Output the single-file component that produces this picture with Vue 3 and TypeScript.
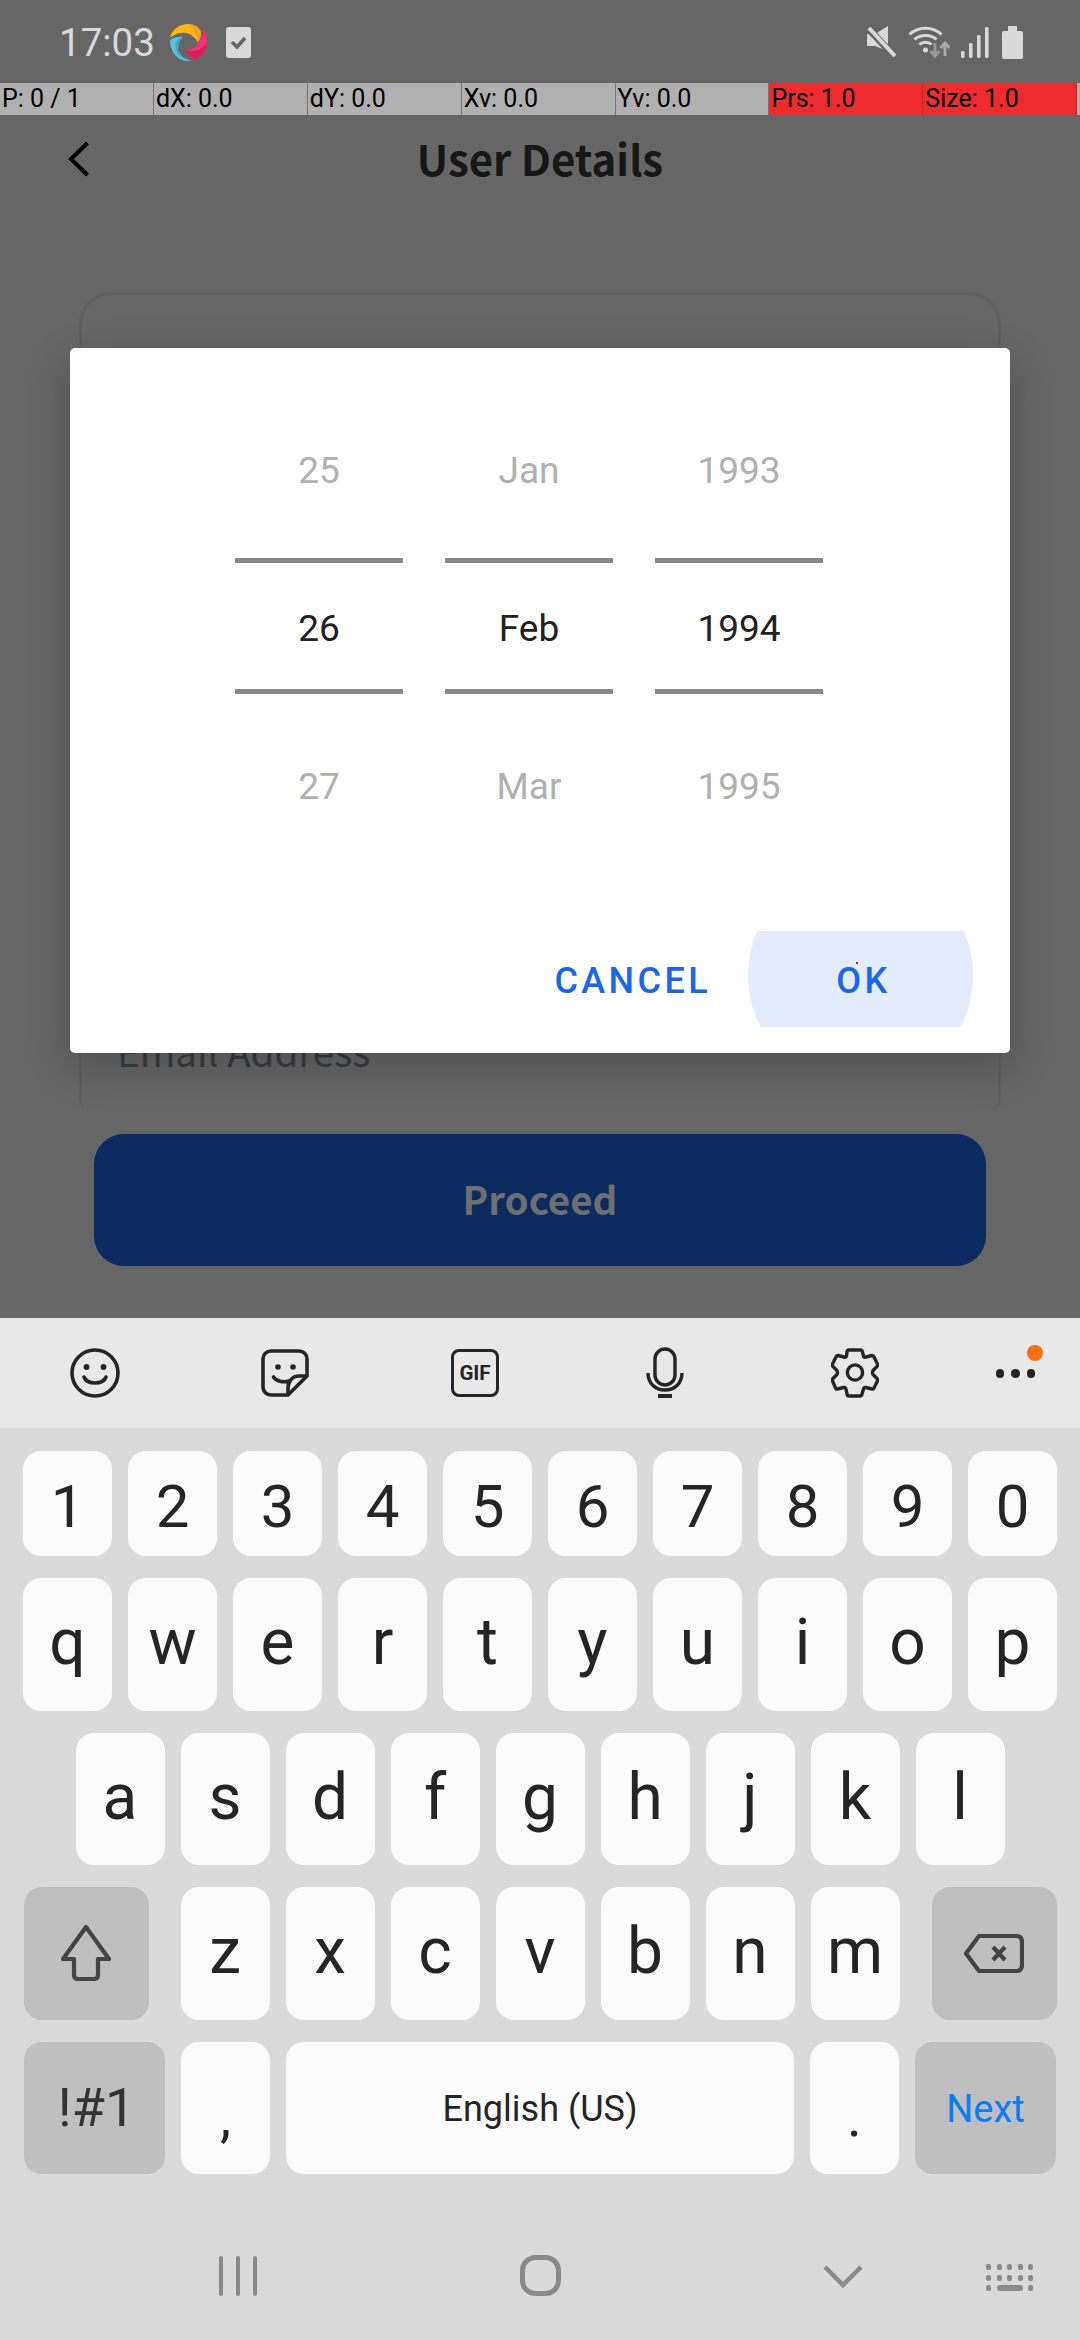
<script setup lang="ts">
const gauges = [
  { text: "P: 0 / 1", alert: false },
  { text: "dX: 0.0", alert: false },
  { text: "dY: 0.0", alert: false },
  { text: "Xv: 0.0", alert: false },
  { text: "Yv: 0.0", alert: false },
  { text: "Prs: 1.0", alert: true },
  { text: "Size: 1.0", alert: true },
];

const wheels = [
  { prev: "25", current: "26", next: "27" },
  { prev: "Jan", current: "Feb", next: "Mar" },
  { prev: "1993", current: "1994", next: "1995" },
];

const digits = "1234567890".split("");
const topRow = "qwertyuiop".split("");
const homeRow = "asdfghjkl".split("");
const lowerRow = "zxcvbnm".split("");
const keyboardDots = [0, 1, 2, 3, 4];
</script>

<template>
  <div class="screen">
    <div class="app-area">
      <div class="status-bar">
        <div class="status-left">
          <span class="time">17:03</span>
          <svg class="logo" width="37" height="37" viewBox="0 0 37 37">
            <path d="M0 14C2 5 10 0 18 0C24 0 29 3 31 8C31 12 30 15 28 18C24 12 18 8 12 9C7 9 3 11 0 14Z" fill="#fdb813" />
            <path d="M18 0C24 0 29 3 31 8C31 12 30 15 28 18C27 11 24 4 18 0Z" fill="#f99d1c" />
            <path d="M33 5C36 8 37 13 37 18C37 27 31 34 24 36C21 33 17 30 15 26C20 26 26 24 28 19C31 15 33 10 33 5Z" fill="#f2336f" />
            <path d="M37 18C37 27 31 34 24 36C21 33 17 30 15 26C23 29 33 26 37 18Z" fill="#d81e5b" />
            <path d="M0 16C3 14 8 12 13 13C9 16 8 21 8 26C10 31 14 35 23 37C21 37 20 37 18 37C8 37 0 28 0 16Z" fill="#5cc3dc" />
            <path d="M13 13C9 16 8 21 8 26C10 31 14 35 23 37C14 37 5 30 5 22C5 18 8 14 13 13Z" fill="#3fa9c9" />
          </svg>
          <svg class="task" width="25" height="31" viewBox="0 0 25 31">
            <rect width="25" height="31" rx="3" fill="#d9d9d9" />
            <path d="M6 15L11 20L19 11" fill="none" stroke="#666" stroke-width="3.6" />
          </svg>
        </div>
        <div class="status-right">
          <svg width="29" height="31" viewBox="0 0 29 31">
            <path d="M0 8H8L21 0V25L8 20H0Z" fill="#d9d9d9" />
            <path d="M0 1L28 31" stroke="#666" stroke-width="7" />
            <path d="M2 2L28 30" stroke="#d9d9d9" stroke-width="4" />
          </svg>
          <svg class="wifi" width="42" height="32" viewBox="0 0 42 32">
            <g fill="none" stroke="#d9d9d9" stroke-width="3">
              <path d="M1.5 8.5C10 0 25 0 33.5 8.5" />
              <path d="M6.5 13.5C12 8 23 8 28.5 13.5" />
              <path d="M11.5 18.5C14.5 15.5 20.5 15.5 23.5 18.5" />
            </g>
            <circle cx="17.5" cy="24" r="2.5" fill="#d9d9d9" />
            <path d="M27 17V29M22.5 25L27 30L31.5 25" fill="none" stroke="#999" stroke-width="3" />
            <path d="M37 30V19M32.5 22L37 17L41.5 22" fill="none" stroke="#a8a8a8" stroke-width="3" />
          </svg>
          <svg class="signal" width="28" height="31" viewBox="0 0 28 31">
            <rect x="0" y="24" width="3.6" height="7" rx="1.2" fill="#d9d9d9" />
            <rect x="8" y="16" width="3.6" height="15" rx="1.2" fill="#d9d9d9" />
            <rect x="16" y="8" width="3.6" height="23" rx="1.2" fill="#d9d9d9" />
            <rect x="24" y="0" width="3.6" height="31" rx="1.2" fill="#d9d9d9" />
          </svg>
          <svg class="battery" width="21" height="33" viewBox="0 0 21 33">
            <path d="M6 0H15V5H19A2 2 0 0 1 21 7V31A2 2 0 0 1 19 33H2A2 2 0 0 1 0 31V7A2 2 0 0 1 2 5H6Z" fill="#d9d9d9" />
          </svg>
        </div>
      </div>

      <div class="pointer-bar">
        <div v-for="g in gauges" :key="g.text" :class="['gauge', { alert: g.alert }]">{{ g.text }}</div>
      </div>

      <header class="header">
        <svg class="back" width="22" height="36" viewBox="0 0 22 36">
          <path d="M19.5 2L3 18L19.5 34" fill="none" stroke="#000" stroke-width="4" />
        </svg>
        <h1>User Details</h1>
      </header>

      <div class="card">
        <span class="email-label">Email Address</span>
      </div>
      <div class="proceed">Proceed</div>

      <div class="dialog">
        <div class="wheels">
          <div v-for="w in wheels" :key="w.current" class="wheel">
            <div class="cell faded">{{ w.prev }}</div>
            <div class="cell current">{{ w.current }}</div>
            <div class="cell faded after">{{ w.next }}</div>
          </div>
        </div>
        <div class="actions">
          <button class="action cancel">CANCEL</button>
          <button class="action ok"><span>OK</span><i class="touch-dot"></i></button>
        </div>
      </div>
    </div>

    <div class="keyboard">
      <div class="toolbar">
        <div class="tool">
          <svg width="50" height="50" viewBox="0 0 50 50">
            <circle cx="25" cy="25" r="23" fill="none" stroke="#252525" stroke-width="3.6" />
            <circle cx="16.5" cy="19" r="2.9" fill="#252525" />
            <circle cx="33.5" cy="19" r="2.9" fill="#252525" />
            <path d="M14 29C17 37 33 37 36 29" fill="none" stroke="#252525" stroke-width="3.6" stroke-linecap="round" />
          </svg>
        </div>
        <div class="tool">
          <svg width="48" height="48" viewBox="0 0 48 48">
            <g fill="none" stroke="#252525" stroke-width="3.6" stroke-linejoin="round">
              <path d="M27 46H10A8 8 0 0 1 2 38V10A8 8 0 0 1 10 2H38A8 8 0 0 1 46 10V27Z" />
              <path d="M46 27H38C31 27 27 33 27 39V46" />
              <path d="M12.5 28C15 32 22 34 28 32" stroke-linecap="round" />
            </g>
            <circle cx="17" cy="18" r="2.8" fill="#252525" />
            <circle cx="32" cy="18" r="2.8" fill="#252525" />
          </svg>
        </div>
        <div class="tool">
          <div class="gif">GIF</div>
        </div>
        <div class="tool">
          <svg width="38" height="51" viewBox="0 0 38 51">
            <g fill="none" stroke="#252525" stroke-width="3.4">
              <rect x="9" y="2" width="20" height="36" rx="10" />
              <path d="M2 26C2 36 9 43 19 43C29 43 36 36 36 26" />
            </g>
            <rect x="12" y="47" width="14" height="4" fill="#252525" />
          </svg>
        </div>
        <div class="tool">
          <svg width="48" height="50" viewBox="0 0 48 50">
            <path d="M17.5 2H29.5Q31 2 31.5 4L32.5 8Q33 10 35 9L41 7.5Q42.5 7.5 43 9L46.5 16Q47 17.5 46 18.5L42 22.5Q41 24.5 42 26.5L46 30.5Q47 31.5 46.5 33L43 40Q42.5 41.5 41 41L35 39.5Q33 39 32.5 41L31 46Q30.5 48 29 48H18Q16.5 48 16 46L15 41Q14.5 39 12.5 39.5L6.5 41Q5 41.5 4.5 40L1.5 33Q1 31.5 2 30.5L6 26.5Q7 24.5 6 22.5L2 18.5Q1 17.5 1.5 16L5 9Q5.5 7.5 7 7.5L13 9Q15 10 15.5 8L16 4Q16.5 2 17.5 2Z" fill="none" stroke="#252525" stroke-width="3.4" stroke-linejoin="round" />
            <circle cx="24" cy="24.5" r="7.6" fill="none" stroke="#252525" stroke-width="3.4" />
          </svg>
        </div>
        <div class="tool more">
          <i></i><i></i><i></i>
          <b class="notice"></b>
        </div>
      </div>

      <div class="rows">
        <div class="row">
          <div v-for="k in digits" :key="k" class="key digit">{{ k }}</div>
        </div>
        <div class="row tall">
          <div v-for="k in topRow" :key="k" class="key">{{ k }}</div>
        </div>
        <div class="row tall">
          <div v-for="k in homeRow" :key="k" class="key">{{ k }}</div>
        </div>
        <div class="row tall lower">
          <div class="key fn shift">
            <svg width="50" height="56" viewBox="0 0 50 56">
              <path d="M25 2L48 34H37V50Q37 54 33 54H17Q13 54 13 50V34H2Z" fill="none" stroke="#444" stroke-width="4.2" stroke-linejoin="round" />
            </svg>
          </div>
          <div class="letters">
            <div v-for="k in lowerRow" :key="k" class="key">{{ k }}</div>
          </div>
          <div class="key fn shift">
            <svg width="60" height="39" viewBox="0 0 60 39">
              <path d="M15 2H52Q58 2 58 8V31Q58 37 52 37H15L2 19.5Z" fill="none" stroke="#444" stroke-width="4.2" stroke-linejoin="round" />
              <path d="M29 13L41 26M41 13L29 26" fill="none" stroke="#444" stroke-width="4.2" />
            </svg>
          </div>
        </div>
        <div class="row tall">
          <div class="key fn wide symbols">!#1</div>
          <div class="key mark">,</div>
          <div class="key space">English (US)</div>
          <div class="key mark">.</div>
          <div class="key fn wide next">Next</div>
        </div>
      </div>

      <div class="nav">
        <svg class="nav-recent" width="38" height="40" viewBox="0 0 38 40">
          <g fill="#8a8a8a">
            <rect x="0" y="0" width="4" height="40" rx="2" />
            <rect x="17" y="0" width="4" height="40" rx="2" />
            <rect x="34" y="0" width="4" height="40" rx="2" />
          </g>
        </svg>
        <svg class="nav-home" width="41" height="41" viewBox="0 0 41 41">
          <rect x="2.5" y="2.5" width="36" height="36" rx="13" fill="none" stroke="#8a8a8a" stroke-width="5" />
        </svg>
        <svg class="nav-back" width="40" height="23" viewBox="0 0 40 23">
          <path d="M2 2L20 20L38 2" fill="none" stroke="#8a8a8a" stroke-width="4.5" />
        </svg>
        <div class="nav-keys">
          <div class="dot-line"><i v-for="d in keyboardDots" :key="d"></i></div>
          <div class="dot-line"><i v-for="d in keyboardDots" :key="d"></i></div>
          <div class="dot-line"><i></i><b></b><i></i></div>
        </div>
      </div>
    </div>
  </div>
</template>

<style scoped>
.screen {
  width: 1080px;
  height: 2340px;
  display: flex;
  flex-direction: column;
  overflow: hidden;
  font-family: Roboto, "Liberation Sans", sans-serif;
  background: #dadada;
}
.app-area {
  position: relative;
  height: 1318px;
  flex: none;
  background: #666;
}
.status-bar {
  height: 83px;
  display: flex;
  justify-content: space-between;
  align-items: flex-start;
  padding: 0 57px 0 59px;
  box-sizing: border-box;
}
.status-left {
  display: flex;
  align-items: flex-start;
}
.time {
  margin-top: 20px;
  font-size: 38.5px;
  line-height: 46px;
  color: #d9d9d9;
}
.logo {
  margin: 24px 0 0 15px;
}
.task {
  margin: 27px 0 0 19px;
}
.status-right {
  display: flex;
  align-items: flex-start;
  padding-top: 26px;
}
.wifi {
  margin-left: 12px;
}
.signal {
  margin: 1px 0 0 11px;
}
.battery {
  margin-left: 13px;
}
.pointer-bar {
  height: 32px;
  display: flex;
  background: #b0b0b0;
}
.gauge {
  width: 153.9px;
  box-sizing: border-box;
  padding-left: 2px;
  border-right: 1px solid #737373;
  font-size: 25px;
  line-height: 32px;
  color: #000;
}
.gauge.alert {
  background: #ee2c2e;
  border-right-color: #c4282a;
}
.header {
  height: 92px;
  display: grid;
  grid-template-columns: 1fr auto 1fr;
  align-items: center;
  padding-left: 68px;
  padding-right: 68px;
}
.back {
  margin-top: -4px;
}
.header h1 {
  margin: -6px 0 0;
  font-family: "Noto Sans CJK SC", "Noto Sans", sans-serif;
  font-size: 42px;
  font-weight: 700;
  line-height: 60px;
  color: #171717;
}
.card {
  margin: 85px 79px 0;
  height: 816px;
  box-sizing: border-box;
  border: 3px solid #5f5f5f;
  border-bottom: none;
  border-radius: 32px 32px 8px 8px;
  padding: 0 35px 30px;
  display: flex;
  align-items: flex-end;
}
.email-label {
  font-family: "Noto Sans CJK SC", "Noto Sans", sans-serif;
  font-size: 38.5px;
  line-height: 56px;
  color: #383c40;
}
.proceed {
  margin: 26px 94px 0;
  height: 132px;
  box-sizing: border-box;
  padding-bottom: 5px;
  border-radius: 30px;
  background: #0b2a60;
  display: flex;
  align-items: center;
  justify-content: center;
  font-family: "Noto Sans CJK SC", "Noto Sans", sans-serif;
  font-size: 38.5px;
  font-weight: 700;
  color: #6f6f6f;
}
.dialog {
  position: absolute;
  left: 70px;
  top: 348px;
  width: 940px;
  height: 705px;
  box-sizing: border-box;
  padding-top: 43px;
  background: #fff;
  border-radius: 5px;
  box-shadow: 0 14px 44px rgba(0, 0, 0, 0.22);
}
.wheels {
  display: flex;
  gap: 42px;
  padding-left: 165px;
}
.wheel {
  width: 168px;
  display: flex;
  flex-direction: column;
}
.cell {
  height: 158px;
  display: flex;
  align-items: center;
  justify-content: center;
  font-size: 37px;
  color: #212121;
}
.cell.faded {
  color: #b0b0b0;
}
.cell.current {
  height: 136px;
  box-sizing: border-box;
  margin-top: 9px;
  padding-top: 4px;
  border-top: 5px solid #888;
  border-bottom: 5px solid #888;
}
.cell.after {
  margin-top: 13px;
}
.actions {
  margin-top: 66px;
  display: flex;
  justify-content: flex-end;
  align-items: stretch;
  padding-right: 37px;
}
.action {
  border: none;
  background: none;
  padding: 0;
  font-family: Roboto, sans-serif;
  font-size: 36px;
  font-weight: 500;
  letter-spacing: 3.4px;
  color: #1a66f0;
}
.cancel {
  margin-right: 37px;
  height: 96px;
  padding-top: 4px;
}
.ok {
  position: relative;
  width: 225px;
  height: 96px;
  overflow: hidden;
  padding: 4px 0 0 6px;
}
.ok span {
  position: relative;
}
.ok::before {
  content: "";
  position: absolute;
  left: 0;
  top: -68.5px;
  width: 225px;
  height: 225px;
  border-radius: 50%;
  background: #e3ecfc;
}
.touch-dot {
  position: absolute;
  left: 108px;
  top: 31px;
  width: 2px;
  height: 2px;
  background: #c0182c;
}
.keyboard {
  flex: 1;
  display: flex;
  flex-direction: column;
  background: #dadada;
}
.toolbar {
  height: 110px;
  flex: none;
  display: grid;
  grid-template-columns: repeat(5, 190px) 130px;
  background: #e8e8e8;
}
.tool {
  display: flex;
  align-items: center;
  justify-content: center;
  padding-bottom: 1px;
}
.gif {
  width: 48px;
  height: 48px;
  box-sizing: border-box;
  border: 3.6px solid #252525;
  border-radius: 8px;
  display: flex;
  align-items: center;
  justify-content: center;
  font-size: 20.5px;
  font-weight: 700;
  color: #252525;
}
.more {
  position: relative;
  gap: 7px;
  padding-top: 2px;
  padding-left: 1px;
}
.more i {
  width: 8.5px;
  height: 8.5px;
  border-radius: 50%;
  background: #252525;
}
.notice {
  position: absolute;
  left: 77px;
  top: 27px;
  width: 16px;
  height: 16px;
  border-radius: 50%;
  background: #fa6e10;
}
.rows {
  padding: 23px 23px 0;
  display: flex;
  flex-direction: column;
  gap: 22px;
}
.row {
  height: 105px;
  display: flex;
  justify-content: center;
  gap: 16px;
}
.row.tall {
  height: 132.5px;
}
.row.lower {
  gap: 32px;
}
.letters {
  display: flex;
  gap: 16px;
}
.key {
  width: 89px;
  flex: none;
  box-sizing: border-box;
  padding-bottom: 3px;
  border-radius: 18px;
  background: #fbfbfb;
  display: flex;
  align-items: center;
  justify-content: center;
  font-size: 64px;
  color: #252525;
}
.digit {
  font-size: 60px;
  padding-top: 5px;
  padding-bottom: 0;
}
.fn {
  background: #bfbfbf;
  padding-bottom: 0;
}
.shift {
  width: 125px;
}
.wide {
  width: 141px;
}
.symbols {
  font-size: 54px;
  padding-left: 4px;
  color: #333;
}
.mark {
  font-size: 56px;
  padding-top: 18px;
  padding-bottom: 0;
}
.space {
  width: 508px;
  font-size: 36px;
  padding-top: 3px;
  padding-bottom: 0;
}
.next {
  font-size: 38px;
  color: #0a7cf5;
  padding-top: 3px;
}
.nav {
  position: relative;
  flex: 1;
}
.nav svg,
.nav-keys {
  position: absolute;
}
.nav-recent {
  left: 219px;
  top: 82px;
}
.nav-home {
  left: 520px;
  top: 81px;
}
.nav-back {
  left: 823px;
  top: 91px;
}
.nav-keys {
  left: 986px;
  top: 90px;
  width: 47px;
  display: flex;
  flex-direction: column;
  gap: 4.5px;
}
.dot-line {
  height: 6px;
  display: flex;
  justify-content: space-between;
  align-items: center;
}
.dot-line i {
  width: 5px;
  height: 6px;
  border-radius: 2px;
  background: #8a8a8a;
}
.dot-line b {
  width: 26px;
  height: 6px;
  border-radius: 3px;
  background: #8a8a8a;
}
</style>

<style>
html,
body {
  margin: 0;
  background: #dadada;
}
</style>
